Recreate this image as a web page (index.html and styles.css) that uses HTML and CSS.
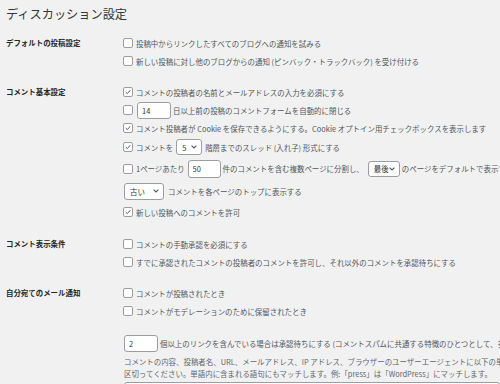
FILE: index.html
```html
<!DOCTYPE html>
<html lang="ja">
<head>
<meta charset="utf-8">
<title>ディスカッション設定</title>
<link rel="stylesheet" href="styles.css">
</head>
<body>
<div class="wrap">
  <h1 class="title">ディスカッション設定</h1>

  <div class="section">
    <div class="th">デフォルトの投稿設定</div>
    <div class="td">
      <div class="opt"><span class="cb"></span><span>投稿中からリンクしたすべてのブログへの通知を試みる</span></div>
      <div class="opt"><span class="cb"></span><span>新しい投稿に対し他のブログからの通知 (ピンバック・トラックバック) を受け付ける</span></div>
    </div>
  </div>

  <div class="section">
    <div class="th">コメント基本設定</div>
    <div class="td">
      <div class="opt"><span class="cb"><svg viewBox="0 0 10 10"><polyline points="2.2,5 4.2,7 7.8,2.8"/></svg></span><span>コメントの投稿者の名前とメールアドレスの入力を必須にする</span></div>
      <div class="opt"><span class="cb"></span><input class="num" type="text" value="14"><span>日以上前の投稿のコメントフォームを自動的に閉じる</span></div>
      <div class="opt"><span class="cb"><svg viewBox="0 0 10 10"><polyline points="2.2,5 4.2,7 7.8,2.8"/></svg></span><span>コメント投稿者が Cookie を保存できるようにする。Cookie オプトイン用チェックボックスを表示します</span></div>
      <div class="opt h20"><span class="cb"><svg viewBox="0 0 10 10"><polyline points="2.2,5 4.2,7 7.8,2.8"/></svg></span><span>コメントを</span><span class="sel sel-s"><span>5</span><svg class="chev" viewBox="0 0 6 4"><polyline points="0.6,0.6 3,3 5.4,0.6"/></svg></span><span>階層までのスレッド (入れ子) 形式にする</span></div>
      <div class="opt h23"><span class="cb"></span><span>1ページあたり</span><input class="num num-b" type="text" value="50"><span>件のコメントを含む複数ページに分割し、</span><span class="sel sel-m"><span>最後</span><svg class="chev" viewBox="0 0 6 4"><polyline points="0.6,0.6 3,3 5.4,0.6"/></svg></span><span>のページをデフォルトで表示する</span></div>
      <div class="opt h22"><span class="sel sel-l"><span>古い</span><svg class="chev" viewBox="0 0 6 4"><polyline points="0.6,0.6 3,3 5.4,0.6"/></svg></span><span>コメントを各ページのトップに表示する</span></div>
      <div class="opt h20"><span class="cb"><svg viewBox="0 0 10 10"><polyline points="2.2,5 4.2,7 7.8,2.8"/></svg></span><span>新しい投稿へのコメントを許可</span></div>
    </div>
  </div>

  <div class="section">
    <div class="th">コメント表示条件</div>
    <div class="td">
      <div class="opt"><span class="cb"></span><span>コメントの手動承認を必須にする</span></div>
      <div class="opt"><span class="cb"></span><span>すでに承認されたコメントの投稿者のコメントを許可し、それ以外のコメントを承認待ちにする</span></div>
    </div>
  </div>

  <div class="section">
    <div class="th">自分宛てのメール通知</div>
    <div class="td">
      <div class="opt"><span class="cb"></span><span>コメントが投稿されたとき</span></div>
      <div class="opt"><span class="cb"></span><span>コメントがモデレーションのために保留されたとき</span></div>
    </div>
  </div>

  <div class="section">
    <div class="th"></div>
    <div class="td">
      <div class="opt h20"><input class="num num-c" type="text" value="2"><span>個以上のリンクを含んでいる場合は承認待ちにする (コメントスパムに共通する特徴のひとつとして、多数のハイパーリンクがあります。)</span></div>
      <p class="desc">コメントの内容、投稿者名、URL、メールアドレス、IP アドレス、ブラウザーのユーザーエージェントに以下の単語のうちいずれかが含まれていれば、そのコメントは承認待ちになります。各単語や IP アドレスは改行で<br>区切ってください。単語内に含まれる語句にもマッチします。例:「press」は「WordPress」にマッチします。</p>
      <div class="textarea"></div>
    </div>
  </div>
</div>
</body>
</html>
```

FILE: styles.css
```css
html, body {
  margin: 0;
  height: 384px;
  overflow: hidden;
  background: #f1f1f1;
}
body {
  font-family: "Noto Sans CJK JP", "Noto Sans", sans-serif;
  font-size: 7.45px;
  color: #50575e;
}
.wrap {
  padding: 4px 0 0 6px;
}
.title {
  margin: 0 0 10px 0;
  height: 20px;
  font-size: 12.2px;
  line-height: 20px;
  font-weight: 400;
  color: #32373c;
}
.section {
  display: grid;
  grid-template-columns: 117px minmax(0, 1fr);
  margin-bottom: 13px;
}
.th {
  height: 18px;
  line-height: 18px;
  font-weight: 700;
  color: #23282d;
  white-space: nowrap;
}
.td {
  min-width: 0;
}
.opt {
  display: flex;
  align-items: center;
  height: 18px;
  white-space: nowrap;
  line-height: 11px;
}
.opt.h20 { height: 20px; }
.opt.h22 { height: 22px; }
.opt.h23 { height: 23px; }
.cb {
  flex: none;
  width: 8px;
  height: 8px;
  border: 1px solid #9a9ea3;
  border-radius: 2px;
  background: #fff;
  margin-right: 3px;
  display: flex;
}
.cb svg {
  width: 8px;
  height: 8px;
  fill: none;
  stroke: #50575e;
  stroke-width: 1.2;
}
.num {
  flex: none;
  box-sizing: border-box;
  width: 34px;
  height: 17px;
  margin: 0 2px 0 1px;
  padding: 0 4px;
  border: 1px solid #9a9ea3;
  border-radius: 3px;
  background: #fff;
  font-family: "Noto Sans CJK JP", "Noto Sans", sans-serif;
  font-size: 7.45px;
  color: #32373c;
  outline: none;
}
.num-b {
  width: 33px;
  margin-left: 3px;
  height: 18px;
}
.num-c {
  margin-left: 1px;
  margin-right: 2px;
}
.sel {
  flex: none;
  box-sizing: border-box;
  display: flex;
  align-items: center;
  justify-content: space-between;
  height: 16px;
  padding: 0 4px 0 5px;
  border: 1px solid #9a9ea3;
  border-radius: 3px;
  background: #fff;
  color: #32373c;
}
.sel-s { width: 26px; margin: 0 3px 0 3px; }
.sel-m { width: 32px; margin: 0 2px 0 4px; }
.sel-l { width: 40px; height: 17px; margin: 0 4px 0 1px; }
.chev {
  width: 6px;
  height: 4px;
  fill: none;
  stroke: #50575e;
  stroke-width: 1.1;
}
.desc {
  margin: 3px 0 0 1px;
  line-height: 11.5px;
  color: #60676e;
  white-space: nowrap;
}
.textarea {
  margin: 3px 0 0 1px;
  height: 40px;
  border: 1px solid #9a9ea3;
  border-radius: 3px;
  background: #fff;
}
```
